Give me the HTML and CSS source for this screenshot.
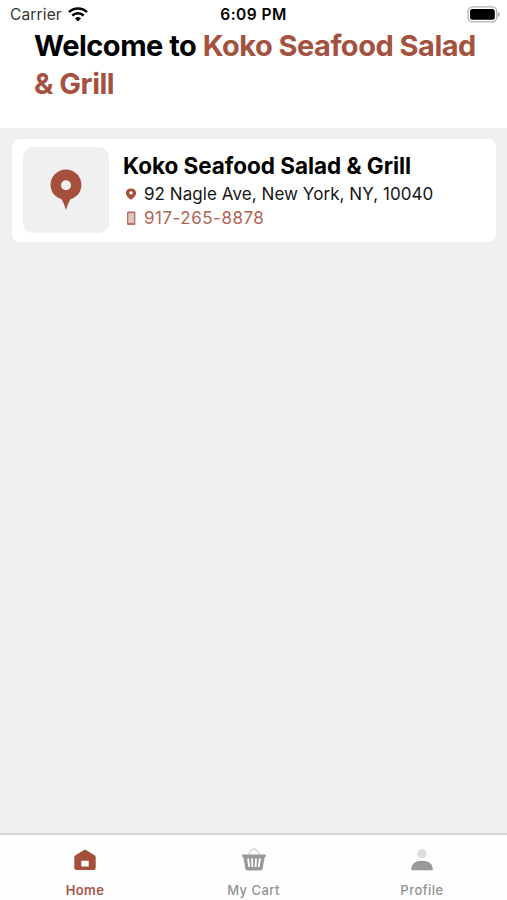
FILE: index.html
```html
<!DOCTYPE html>
<html lang="en">
<head>
<meta charset="utf-8">
<title>Koko Seafood Salad &amp; Grill</title>
<link rel="stylesheet" href="styles.css">
</head>
<body>
<div class="screen">
  <header class="header">
    <div class="status">
      <div class="carrier"><span>Carrier</span>
        <svg width="20" height="15" viewBox="0 0 20 15" fill="none" stroke="#000" stroke-width="2.6"><path d="M1 5.1a13 13 0 0 1 18 0M4.3 8.5a8.3 8.3 0 0 1 11.4 0"/><path d="M7 11.4a4.4 4.4 0 0 1 6 0L10 14.5Z" fill="#000" stroke="none"/></svg>
      </div>
      <time class="time">6:09 PM</time>
      <svg class="battery" width="33" height="17" viewBox="0 0 33 17"><rect x="1" y=".9" width="28.8" height="15" rx="4.6" fill="#fff" stroke="#b4b4b4" stroke-width="1.4"/><rect x="3" y="3" width="24.8" height="10.8" rx="2.5"/><path d="M31.2 6v5q1.5-.8 1.5-2.5T31.200 6Z" fill="#999"/></svg>
    </div>
    <h1 class="welcome"><span>Welcome to</span> <span class="brand">Koko Seafood Salad</span> <span class="brand">&amp;&nbsp;Grill</span></h1>
  </header>
  <main class="content">
    <article class="card">
      <div class="thumb">
        <svg width="32" height="42" viewBox="0 0 32 42"><path fill="#a4503c" fill-rule="evenodd" d="M16 .5C7.300.5.6 7.400.6 15.800c0 7.100 4.400 12.500 10.700 14.300 2 2.400 3.200 6.800 4.700 11 1.500-4.200 2.700-8.600 4.700-11 6.300-1.800 10.700-7.200 10.700-14.300C31.400 7.400 24.700.5 16 .5Zm0 10.700a5 5 0 1 1 0 10 5 5 0 0 1 0-10Z"/></svg>
      </div>
      <div class="info">
        <h2 class="name">Koko Seafood Salad &amp; Grill</h2>
        <div class="line address">
          <svg width="12" height="12" viewBox="0 0 12 12"><path fill="#a4503c" fill-rule="evenodd" d="M6 .4C2.800.4.9 2.400.9 5c0 3 3 5.300 5.100 6.800C8.100 10.300 11.100 8 11.100 5 11.100 2.400 9.200.4 6 .4Zm0 2.800a1.700 1.700 0 1 1 0 3.400 1.700 1.700 0 0 1 0-3.400Z"/></svg>
          <span>92 Nagle Ave, New York, NY, 10040</span>
        </div>
        <div class="line phone">
          <svg width="12" height="15" viewBox="0 0 12 15"><rect x="2" y=".4" width="8.400" height="13.600" rx="1" fill="#b8705f"/><rect x="3.300" y="2.200" width="5.800" height="9.800" fill="#dfc5bf"/></svg>
          <span>917-265-8878</span>
        </div>
      </div>
    </article>
  </main>
  <nav class="tabs">
    <div class="tab active">
      <svg width="26" height="26" viewBox="0 0 26 26"><path fill="#a4503c" fill-rule="evenodd" d="M13 2.600 3.800 8q-1.500.9-1.500 2.600V21q0 2 2 2h17.400q2 0 2-2V10.600q0-1.700-1.500-2.600ZM9.300 13.800h7.400v5.800H9.300Z"/></svg>
      <span>Home</span>
    </div>
    <div class="tab cart">
      <svg width="26" height="26" viewBox="0 0 26 26"><path d="M7.400 9C8.100 4.700 11 2 13 2s4.900 2.700 5.600 7" fill="none" stroke="#d6d6d6" stroke-width="1.400"/><path fill="#999" fill-rule="evenodd" d="M1.800 7.500h22.400q.8 0 .7.900l-.2 1.400-1.100.6-1.900 11.100q-.3 1.900-2.200 1.900h-13q-1.900 0-2.200-1.900L2.400 10.400l-1.100-.6-.2-1.400q-.1-.9.7-.9Z"/><path d="m7 11.500 1.300 8.500M11 11.500l.4 8.500M15 11.500l-.4 8.500M19 11.500 17.700 20" fill="none" stroke="#fefefe" stroke-width="1.800"/></svg>
      <span>My Cart</span>
    </div>
    <div class="tab profile">
      <svg width="26" height="26" viewBox="0 0 26 26"><circle cx="13" cy="6.600" r="4.700" fill="#dedede"/><path d="M2.200 22.500C2.200 17 6.700 13.700 13 13.700S23.800 17 23.800 22.500q0 .7-.8.7H3q-.8 0-.8-.7Z" fill="#999"/></svg>
      <span>Profile</span>
    </div>
  </nav>
</div>
</body>
</html>
```

FILE: styles.css
```css
* { box-sizing: border-box; }
body { margin: 0; font-family: Inter, sans-serif; color: #000; }
h1, h2 { margin: 0; }
svg { display: block; flex: none; }
.screen { display: flex; flex-direction: column; width: 507px; height: 900px; background: #f0f0f0; }
.header { height: 128px; background: #fff; }
.status { display: grid; grid-template-columns: 1fr auto 1fr; align-items: center; height: 27px; padding: 2px 7px 0 9px; }
.carrier { display: flex; align-items: center; gap: 6px; padding-left: 1px; font-size: 15.5px; letter-spacing: .15px; color: #333; }
.time { font-size: 15.5px; font-weight: 600; letter-spacing: .45px; transform: translateX(-1px); }
.battery { justify-self: end; }
.welcome { padding: 0 20px 0 34px; font-size: 29px; line-height: 38px; font-weight: 650; letter-spacing: -.5px; }
.brand { color: #a4523f; }
.content { flex: 1; padding: 11px 11px 0 12px; }
.card { display: flex; height: 103px; padding: 8px 11px; border-radius: 8px; background: #fff; }
.thumb { display: flex; align-items: center; justify-content: center; flex: none; width: 86px; height: 86px; border-radius: 10px; background: #f0f0f0; }
.info { padding: 4px 0 0 14px; white-space: nowrap; }
.name { height: 31px; font-size: 22.5px; line-height: 30px; font-weight: 650; letter-spacing: -.04px; }
.line { display: flex; align-items: center; height: 24px; gap: 7px; padding-left: 2px; font-size: 17px; }
.address { letter-spacing: .06px; color: #161616; }
.phone { letter-spacing: .5px; color: #b06454; }
.tabs { display: grid; grid-template-columns: 170px 168px 169px; height: 67px; padding-top: 12px; border-top: 2px solid #d4d4d4; background: #fefefe; }
.tab { display: flex; flex-direction: column; align-items: center; gap: 8px; font-size: 13px; line-height: 18px; font-weight: 500; letter-spacing: .45px; color: #929292; }
.cart { padding-right: 1px; }
.profile { padding-right: 1px; }
.active { color: #a75745; font-weight: 600; letter-spacing: .35px; }
```
